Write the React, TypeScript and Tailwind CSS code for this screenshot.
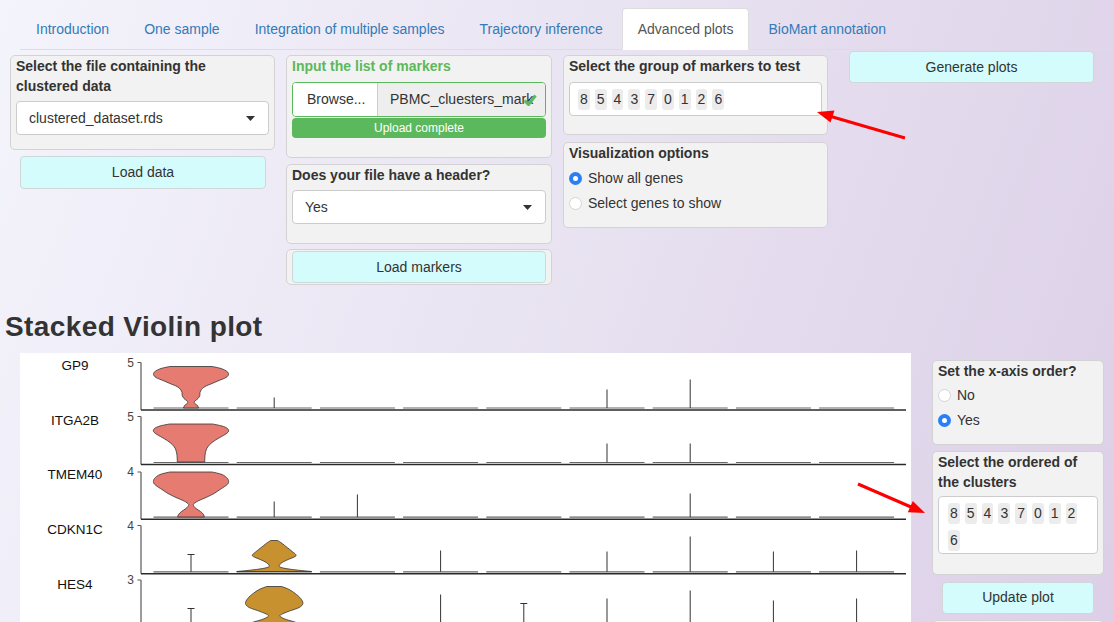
import React from 'react';

type Pt = [number, number];

const tabs = ['Introduction', 'One sample', 'Integration of multiple samples', 'Trajectory inference', 'Advanced plots', 'BioMart annotation'];
const clusters = ['8', '5', '4', '3', '7', '0', '1', '2', '6'];

// catmull-rom -> bezier so the violins look smooth
function smooth(p: Pt[]) {
  let d = '';
  for (let i = 0; i < p.length - 1; i++) {
    const p0 = p[i - 1] || p[i];
    const p1 = p[i];
    const p2 = p[i + 1];
    const p3 = p[i + 2] || p2;
    const c1x = p1[0] + (p2[0] - p0[0]) / 6;
    const c1y = p1[1] + (p2[1] - p0[1]) / 6;
    const c2x = p2[0] - (p3[0] - p1[0]) / 6;
    const c2y = p2[1] - (p3[1] - p1[1]) / 6;
    d += ` C${c1x.toFixed(1)},${c1y.toFixed(1)} ${c2x.toFixed(1)},${c2y.toFixed(1)} ${p2[0].toFixed(1)},${p2[1].toFixed(1)}`;
  }
  return d;
}

function violin(cx: number, prof: Pt[]) {
  const right: Pt[] = prof.map(([y, w]) => [cx + w, y]);
  const left: Pt[] = prof.slice().reverse().map(([y, w]) => [cx - w, y]);
  return `M${right[0][0]},${right[0][1]}${smooth(right)} L${left[0][0]},${left[0][1]}${smooth(left)} Z`;
}

const cols = Array.from({ length: 9 }, (_, i) => 191 + i * 83.2);

const rows = [
  {
    name: 'GP9', tick: '5', top: 362, base: 409.5, label: 365,
    spikes: [[1, 397], [5, 389], [6, 379]] as number[][],
    violin: { col: 0, fill: '#e67b71', prof: [[366, 21], [368, 30], [371, 36], [374, 37.5], [377, 35], [380, 28], [383, 21], [386, 14], [389, 10.5], [392, 9], [395, 8.8], [398, 7], [401, 3.5], [403, 3.8], [405, 6.5], [407.5, 7.5]] as Pt[] },
  },
  {
    name: 'ITGA2B', tick: '5', top: 416, base: 464, label: 420,
    spikes: [[5, 443], [6, 443]],
    violin: { col: 0, fill: '#e67b71', prof: [[423.5, 21.5], [425.5, 31], [428, 36.5], [431, 37.5], [434, 34], [438, 27], [442, 21], [446, 17], [450, 15], [455, 14], [461.5, 13.7]] as Pt[] },
  },
  {
    name: 'TMEM40', tick: '4', top: 471.5, base: 518.7, label: 474,
    spikes: [[1, 501], [2, 494], [6, 493]],
    violin: { col: 0, fill: '#e67b71', prof: [[471.5, 21], [474, 31], [478, 36.5], [482, 37.5], [485, 35], [489, 29], [493, 23], [497, 15], [500, 8], [503, 3], [505, 2.5], [508, 5], [511, 9.5], [514, 12.5], [516.5, 13.3]] as Pt[] },
  },
  {
    name: 'CDKN1C', tick: '4', top: 525, base: 573.3, label: 528.5,
    spikes: [[0, 554, 1], [3, 550], [5, 551], [6, 536], [7, 551], [8, 550]],
    violin: { col: 1, fill: '#c8912f', prof: [[540, 3.5], [543, 8], [547, 13], [551, 18], [554, 21.5], [556, 21], [559, 14], [562, 8], [565, 5], [567, 7], [569, 18], [570.3, 30], [571, 37.5]] as Pt[] },
  },
  {
    name: 'HES4', tick: '3', top: 579.5, base: 628, label: 583.5,
    spikes: [[0, 608, 1], [3, 594], [4, 603, 1], [5, 598], [6, 590], [7, 600], [8, 598]],
    violin: { col: 1, fill: '#c8912f', prof: [[586, 7.5], [589, 15], [593, 21], [598, 26.5], [603, 28.7], [607, 25], [611, 14], [614, 7], [616, 6], [619, 12], [622, 22], [626, 30], [628, 37]] as Pt[] },
  },
];

function Caret() {
  return (
    <svg width="9" height="5" viewBox="0 0 9 5" className="shrink-0">
      <polygon points="0,0 9,0 4.5,5" fill="#333" />
    </svg>
  );
}

function Select({ value }: { value: string }) {
  return (
    <div className="h-[34px] bg-white border border-[#ccc] rounded-[4px] pl-[12px] pr-[13px] flex items-center justify-between">
      <span>{value}</span>
      <Caret />
    </div>
  );
}

function Radio({ checked, label }: { checked?: boolean; label: string }) {
  return (
    <div className="h-[20px] flex items-center gap-[6px]">
      {checked ? (
        <span className="w-[13px] h-[13px] rounded-full bg-[#2a7ef6] flex items-center justify-center shrink-0">
          <span className="w-[5px] h-[5px] rounded-full bg-white" />
        </span>
      ) : (
        <span className="w-[13px] h-[13px] rounded-full bg-white border border-[#d5d5d5] shrink-0" />
      )}
      <span>{label}</span>
    </div>
  );
}

function Chips({ className }: { className: string }) {
  return (
    <div className={`bg-white border border-[#ccc] rounded-[4px] flex flex-wrap gap-x-[5px] gap-y-[4px] ${className}`}>
      {clusters.map((c) => (
        <span key={c} className="h-[21px] px-[2px] bg-[#ececec] rounded-[3px] leading-[21px] text-[14px]">
          {c}
        </span>
      ))}
    </div>
  );
}

function Button({ label, className }: { label: string; className: string }) {
  return (
    <div className={`bg-[#d4fcfc] border border-[#cfd8d8] rounded-[4px] flex items-center justify-center ${className}`}>
      {label}
    </div>
  );
}

function ViolinPlot() {
  return (
    <svg width="891" height="290" viewBox="20 352.5 891 290" className="block">
      <rect x="20" y="352.5" width="891" height="290" fill="#fff" />
      {rows.map((r) => (
        <g key={r.name}>
          <text x="75" y={r.label} textAnchor="middle" dominantBaseline="central" fontSize="13.5" fill="#111" fontFamily="Liberation Sans, Arial, sans-serif">
            {r.name}
          </text>
          <text x="134" y={r.top} textAnchor="end" dominantBaseline="central" fontSize="12" fill="#444" fontFamily="Liberation Sans, Arial, sans-serif">
            {r.tick}
          </text>
          <line x1="137.5" y1={r.top} x2="141" y2={r.top} stroke="#555" strokeWidth="1" />
          <line x1="141" y1={r.top} x2="141" y2={r.base} stroke="#7a7a7a" strokeWidth="1.5" />
          {cols.map((cx, i) => (
            <line key={i} x1={cx - 37.5} y1={r.base - 2} x2={cx + 37.5} y2={r.base - 2} stroke="#666" strokeWidth="1.2" />
          ))}
          {r.spikes.map(([c, y, cap], i) => (
            <g key={i}>
              <line x1={cols[c]} y1={y} x2={cols[c]} y2={r.base - 2} stroke="#333" strokeWidth="1" />
              {cap ? <line x1={cols[c] - 3.5} y1={y} x2={cols[c] + 3.5} y2={y} stroke="#333" strokeWidth="1" /> : null}
            </g>
          ))}
          <path d={violin(cols[r.violin.col], r.violin.prof)} fill={r.violin.fill} stroke="#333" strokeWidth="0.8" />
          <line x1="141" y1={r.base} x2="906" y2={r.base} stroke="#2a2a2a" strokeWidth="1.4" />
        </g>
      ))}
    </svg>
  );
}

function Arrows() {
  return (
    <svg width="1114" height="622" className="absolute left-0 top-0 pointer-events-none">
      <line x1="905" y1="138" x2="831" y2="116.5" stroke="#f00" strokeWidth="3" />
      <polygon points="817,112 834.5,110.5 830.5,122.5" fill="#f00" />
      <line x1="858" y1="484" x2="911" y2="507" stroke="#f00" strokeWidth="3" />
      <polygon points="925,513 907.8,512.3 912.8,500.9" fill="#f00" />
    </svg>
  );
}

export default function App() {
  return (
    <div className="relative h-[622px] w-full overflow-hidden bg-[linear-gradient(110deg,#f4f4fc_0%,#e9e4f2_45%,#dccfe7_100%)] font-['Liberation_Sans',Arial,sans-serif] text-[14px] text-[#333]">
      <ul className="ml-[20px] mt-[8px] flex border-b border-[#ddd]">
        {tabs.map((t) => (
          <li key={t} className="-mb-px mr-[3px]">
            <div
              className={
                t === 'Advanced plots'
                  ? 'px-[15px] py-[10px] leading-[20px] rounded-t-[4px] border border-[#ddd] border-b-transparent bg-white text-[#555]'
                  : 'px-[15px] py-[10px] leading-[20px] rounded-t-[4px] border border-transparent text-[#337ab7]'
              }
            >
              {t}
            </div>
          </li>
        ))}
      </ul>

      <div className="flex items-start">
        <div className="ml-[10px] w-[265px] mt-[5px]">
          <div className="bg-[#f2f2f2] border border-[#d3d3d3] rounded-[5px] px-[5px]">
            <div className="font-bold leading-[20px] mb-[5px]">Select the file containing the clustered data</div>
            <Select value="clustered_dataset.rds" />
            <div className="h-[14px]" />
          </div>
          <Button label="Load data" className="ml-[10px] w-[246px] h-[33px] mt-[6px]" />
        </div>

        <div className="ml-[11px] w-[266px] mt-[5px]">
          <div className="bg-[#f2f2f2] border border-[#d3d3d3] rounded-[5px] px-[5px]">
            <div className="font-bold leading-[20px] mb-[6px] text-[#5cb85c]">Input the list of markers</div>
            <div className="h-[35px] flex border border-[#5cb85c] rounded-[4px] overflow-hidden">
              <div className="w-[85px] bg-white border-r border-[#ccc] flex items-center pl-[14px]">Browse...</div>
              <div className="relative flex-1 bg-[#eee] flex items-center pl-[12px] pr-[8px] overflow-hidden">
                <span className="whitespace-nowrap">PBMC_cluesters_mark</span>
                <svg width="14" height="12" viewBox="0 0 14 12" className="absolute right-[8px] top-[11px]">
                  <path d="M1.5 6.5 L5.5 10.5 L12.5 1.5" fill="none" stroke="#5cb85c" strokeWidth="3" />
                </svg>
              </div>
            </div>
            <div className="mt-[1px] h-[20px] bg-[#5cb85c] rounded-[4px] text-white text-[12px] leading-[20px] text-center">Upload complete</div>
            <div className="h-[19px]" />
          </div>
          <div className="mt-[6px] bg-[#f2f2f2] border border-[#d3d3d3] rounded-[5px] px-[5px]">
            <div className="font-bold leading-[20px] mb-[5px]">Does your file have a header?</div>
            <Select value="Yes" />
            <div className="h-[19px]" />
          </div>
          <div className="mt-[5px] bg-[#f2f2f2] border border-[#d3d3d3] rounded-[5px] px-[5px] py-[1px]">
            <Button label="Load markers" className="h-[32px]" />
          </div>
        </div>

        <div className="ml-[11px] w-[265px] mt-[5px]">
          <div className="bg-[#f2f2f2] border border-[#d3d3d3] rounded-[5px] px-[5px]">
            <div className="font-bold leading-[20px] mb-[6px]">Select the group of markers to test</div>
            <Chips className="h-[34px] px-[8px] pt-[6px]" />
            <div className="h-[18px]" />
          </div>
          <div className="mt-[7px] bg-[#f2f2f2] border border-[#d3d3d3] rounded-[5px] px-[5px]">
            <div className="font-bold leading-[20px]">Visualization options</div>
            <div className="mt-[5px]">
              <Radio checked label="Show all genes" />
            </div>
            <div className="mt-[5px]">
              <Radio label="Select genes to show" />
            </div>
            <div className="h-[14px]" />
          </div>
        </div>

        <Button label="Generate plots" className="ml-[21px] w-[245px] h-[32px] mt-[1px]" />
      </div>

      <h3 className="mt-[27px] ml-[5px] text-[28px] leading-[1.1] font-bold tracking-[0.4px] text-[#333]">Stacked Violin plot</h3>

      <div className="mt-[10px] flex items-start">
        <div className="ml-[20px] w-[891px]">
          <ViolinPlot />
        </div>
        <div className="ml-[21px] w-[172px] mt-[7px]">
          <div className="bg-[#f2f2f2] border border-[#d3d3d3] rounded-[5px] px-[5px]">
            <div className="font-bold leading-[20px]">Set the x-axis order?</div>
            <div className="mt-[5px]">
              <Radio label="No" />
            </div>
            <div className="mt-[5px]">
              <Radio checked label="Yes" />
            </div>
            <div className="h-[13px]" />
          </div>
          <div className="mt-[6px] bg-[#f2f2f2] border border-[#d3d3d3] rounded-[5px] px-[5px]">
            <div className="font-bold leading-[20px] mb-[4px]">Select the ordered of the clusters</div>
            <Chips className="h-[58px] pl-[9px] pr-[8px] pt-[6px]" />
            <div className="h-[20px]" />
          </div>
          <Button label="Update plot" className="ml-[10px] w-[152px] h-[32px] mt-[7px]" />
          <div className="mt-[6px] h-[60px] bg-[#f2f2f2] border border-[#d3d3d3] rounded-[5px]" />
        </div>
      </div>

      <Arrows />
    </div>
  );
}
